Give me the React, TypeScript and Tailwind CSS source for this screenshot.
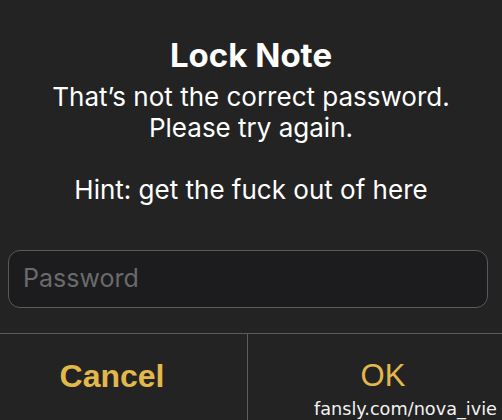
export default function App() {
  return (
    <div className="relative h-[420px] w-[502px] overflow-hidden bg-[#232323] text-white [font-family:Inter,'Noto_Sans',sans-serif]">
      <div className="flex flex-col items-center pt-[35px] text-center">
        <h1 className="text-[33px] font-bold leading-[40px]">Lock Note</h1>
        <p className="mt-[6px] text-[26px] leading-[31px]">
          That’s not the correct password.
          <br />
          Please try again.
          <br />
          <br />
          Hint: get the fuck out of here
        </p>
      </div>

      <div className="mt-[45px] px-[8px]">
        <div className="flex h-[58px] w-[480px] items-center rounded-[12px] border border-[#5a5a5a] bg-[#1c1c1e] pl-[14px]">
          <span className="text-[25px] text-[#6a6a6c]">Password</span>
        </div>
      </div>

      <div className="mt-[25px] flex h-[88px] border-t border-[#5c5c5c] [font-family:'Liberation_Sans',Arial,sans-serif]">
        <button className="flex w-[248px] items-start justify-center border-r border-[#5c5c5c] pr-[23px] pt-[18px] text-[32px] font-bold text-[#e2b84c]">
          Cancel
        </button>
        <button className="flex flex-1 items-start justify-center pl-[16px] pt-[19px] text-[31px] text-[#e2b84c]">
          OK
        </button>
      </div>

      <div className="absolute bottom-[0px] right-[5px] text-[17.7px] leading-[22px] text-[#f2f2f2] [font-family:'DejaVu_Sans',sans-serif]">
        fansly.com/nova_ivie
      </div>
    </div>
  );
}
